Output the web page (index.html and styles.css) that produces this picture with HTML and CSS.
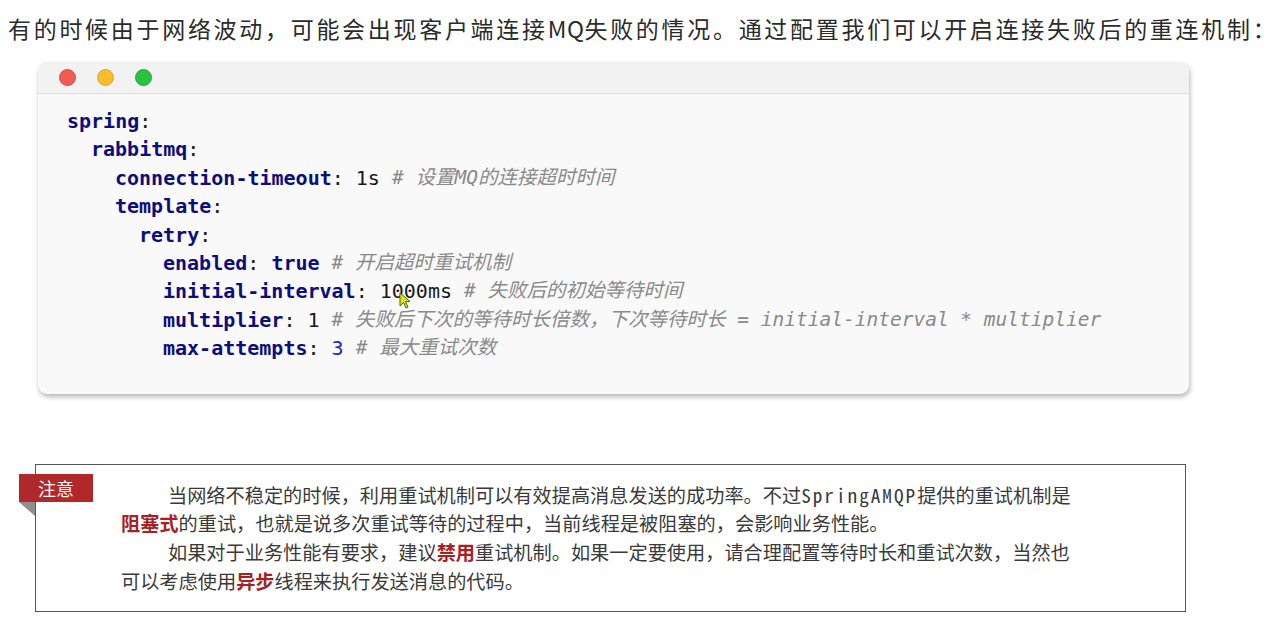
FILE: index.html
```html
<!DOCTYPE html>
<html lang="zh">
<head>
<meta charset="utf-8">
<title>重连机制</title>
<link rel="stylesheet" href="styles.css">
</head>
<body>
<p class="lead">有的时候由于网络波动，可能会出现客户端连接<span class="latin">MQ</span>失败的情况。通过配置我们可以开启连接失败后的重连机制：</p>

<div class="card">
  <div class="titlebar">
    <span class="dot red"></span>
    <span class="dot yellow"></span>
    <span class="dot green"></span>
  </div>
  <div class="code">
    <div class="line"><span class="k">spring</span><span>:</span></div>
    <div class="line i1"><span class="k">rabbitmq</span><span>:</span></div>
    <div class="line i2"><span class="k">connection-timeout</span><span>: 1s </span><span class="c"># 设置MQ的连接超时时间</span></div>
    <div class="line i2"><span class="k">template</span><span>:</span></div>
    <div class="line i3"><span class="k">retry</span><span>:</span></div>
    <div class="line i4"><span class="k">enabled</span><span>: </span><span class="k">true</span><span> </span><span class="c"># 开启超时重试机制</span></div>
    <div class="line i4"><span class="k">initial-interval</span><span>: </span><span class="cursor-wrap">1000ms<svg class="cursor" width="14" height="18" viewBox="0 0 14 18"><path d="M1 1 L1 14 L4.5 10.5 L7 16 L9 15 L6.5 9.5 L11 9.5 Z" fill="#d6e61e" stroke="#5a6400" stroke-width="1"/></svg></span><span> </span><span class="c"># 失败后的初始等待时间</span></div>
    <div class="line i4"><span class="k">multiplier</span><span>: 1 </span><span class="c"># 失败后下次的等待时长倍数，下次等待时长 = initial-interval * multiplier</span></div>
    <div class="line i4"><span class="k">max-attempts</span><span>: </span><span class="n">3</span><span> </span><span class="c"># 最大重试次数</span></div>
  </div>
</div>

<div class="note">
  <span class="tag">注意</span>
  <div class="para">
    <span class="row first">当网络不稳定的时候，利用重试机制可以有效提高消息发送的成功率。不过<span class="mono">SpringAMQP</span>提供的重试机制是</span>
    <span class="row"><b class="hl">阻塞式</b>的重试，也就是说多次重试等待的过程中，当前线程是被阻塞的，会影响业务性能。</span>
  </div>
  <div class="para">
    <span class="row first">如果对于业务性能有要求，建议<b class="hl">禁用</b>重试机制。如果一定要使用，请合理配置等待时长和重试次数，当然也</span>
    <span class="row">可以考虑使用<b class="hl">异步</b>线程来执行发送消息的代码。</span>
  </div>
</div>
</body>
</html>
```

FILE: styles.css
```css
html, body {
  margin: 0;
  padding: 0;
  background: #ffffff;
}

body {
  font-family: "Noto Sans CJK SC", "Noto Sans", sans-serif;
  color: #333;
  padding-top: 10px;
}

.lead {
  margin: 0 0 0 8px;
  font-size: 23px;
  line-height: 36px;
  letter-spacing: 2.7px;
  color: #2b2b2b;
  white-space: nowrap;
}

.latin {
  letter-spacing: 0.5px;
}

.card {
  margin: 16px 0 0 38px;
  width: 1151px;
  border-radius: 9px;
  background: #f8f9f8;
  box-shadow: 1px 3px 5px rgba(0, 0, 0, 0.28), 0 0 1px rgba(0, 0, 0, 0.08);
  overflow: hidden;
}

.titlebar {
  height: 31px;
  background: #f2f2f2;
  border-bottom: 1px solid #dcdcdc;
  display: flex;
  align-items: center;
  gap: 21px;
  padding-left: 21px;
}

.dot {
  width: 17px;
  height: 17px;
  border-radius: 50%;
  box-sizing: border-box;
}
.dot.red { background: #f25a55; border: 1px solid #de4a45; }
.dot.yellow { background: #f9bc2e; border: 1px solid #e3a821; }
.dot.green { background: #2ac33f; border: 1px solid #20ad33; }

.code {
  padding: 13px 0 31px 29px;
  font-family: "DejaVu Sans Mono", "Noto Sans CJK SC", monospace;
  font-size: 20px;
  color: #1a1a1a;
  display: flex;
  flex-direction: column;
}

.line {
  height: 28.4px;
  line-height: 28.4px;
  white-space: pre;
  display: flex;
  align-items: center;
}

.i1 { padding-left: 24px; }
.i2 { padding-left: 48px; }
.i3 { padding-left: 72px; }
.i4 { padding-left: 96px; }

.k {
  color: #0d0d7d;
  font-weight: bold;
}

.n {
  color: #1f1fc8;
}

.c {
  color: #8a8a8a;
  font-style: italic;
  font-size: 19.5px;
}

.cursor-wrap {
  position: relative;
}

.cursor {
  position: absolute;
  left: 19px;
  top: 15px;
}

.note {
  position: relative;
  margin: 70px 0 0 35px;
  width: 1151px;
  box-sizing: border-box;
  border: 1.5px solid #555;
  padding: 16px 40px 16px 85px;
  font-family: "Noto Sans CJK SC", sans-serif;
  font-size: 19.2px;
  line-height: 28.7px;
  color: #3a3a3a;
}

.para {
  display: flex;
  flex-direction: column;
}

.row {
  display: block;
  white-space: nowrap;
}

.row.first {
  padding-left: 47px;
}

.mono {
  font-family: "Noto Sans Mono CJK SC", "DejaVu Sans Mono", monospace;
  font-size: 19.2px;
  letter-spacing: 2px;
}

.hl {
  color: #a8201f;
  font-weight: bold;
}

.tag {
  position: absolute;
  left: -17px;
  top: 9px;
  width: 74px;
  height: 28px;
  background: #b0282a;
  color: #fff;
  font-size: 18px;
  line-height: 28px;
  text-align: center;
}

.tag::after {
  content: "";
  position: absolute;
  left: 0;
  top: 28px;
  border-style: solid;
  border-width: 0 16px 14px 0;
  border-color: transparent #8f8f8f transparent transparent;
}
```
